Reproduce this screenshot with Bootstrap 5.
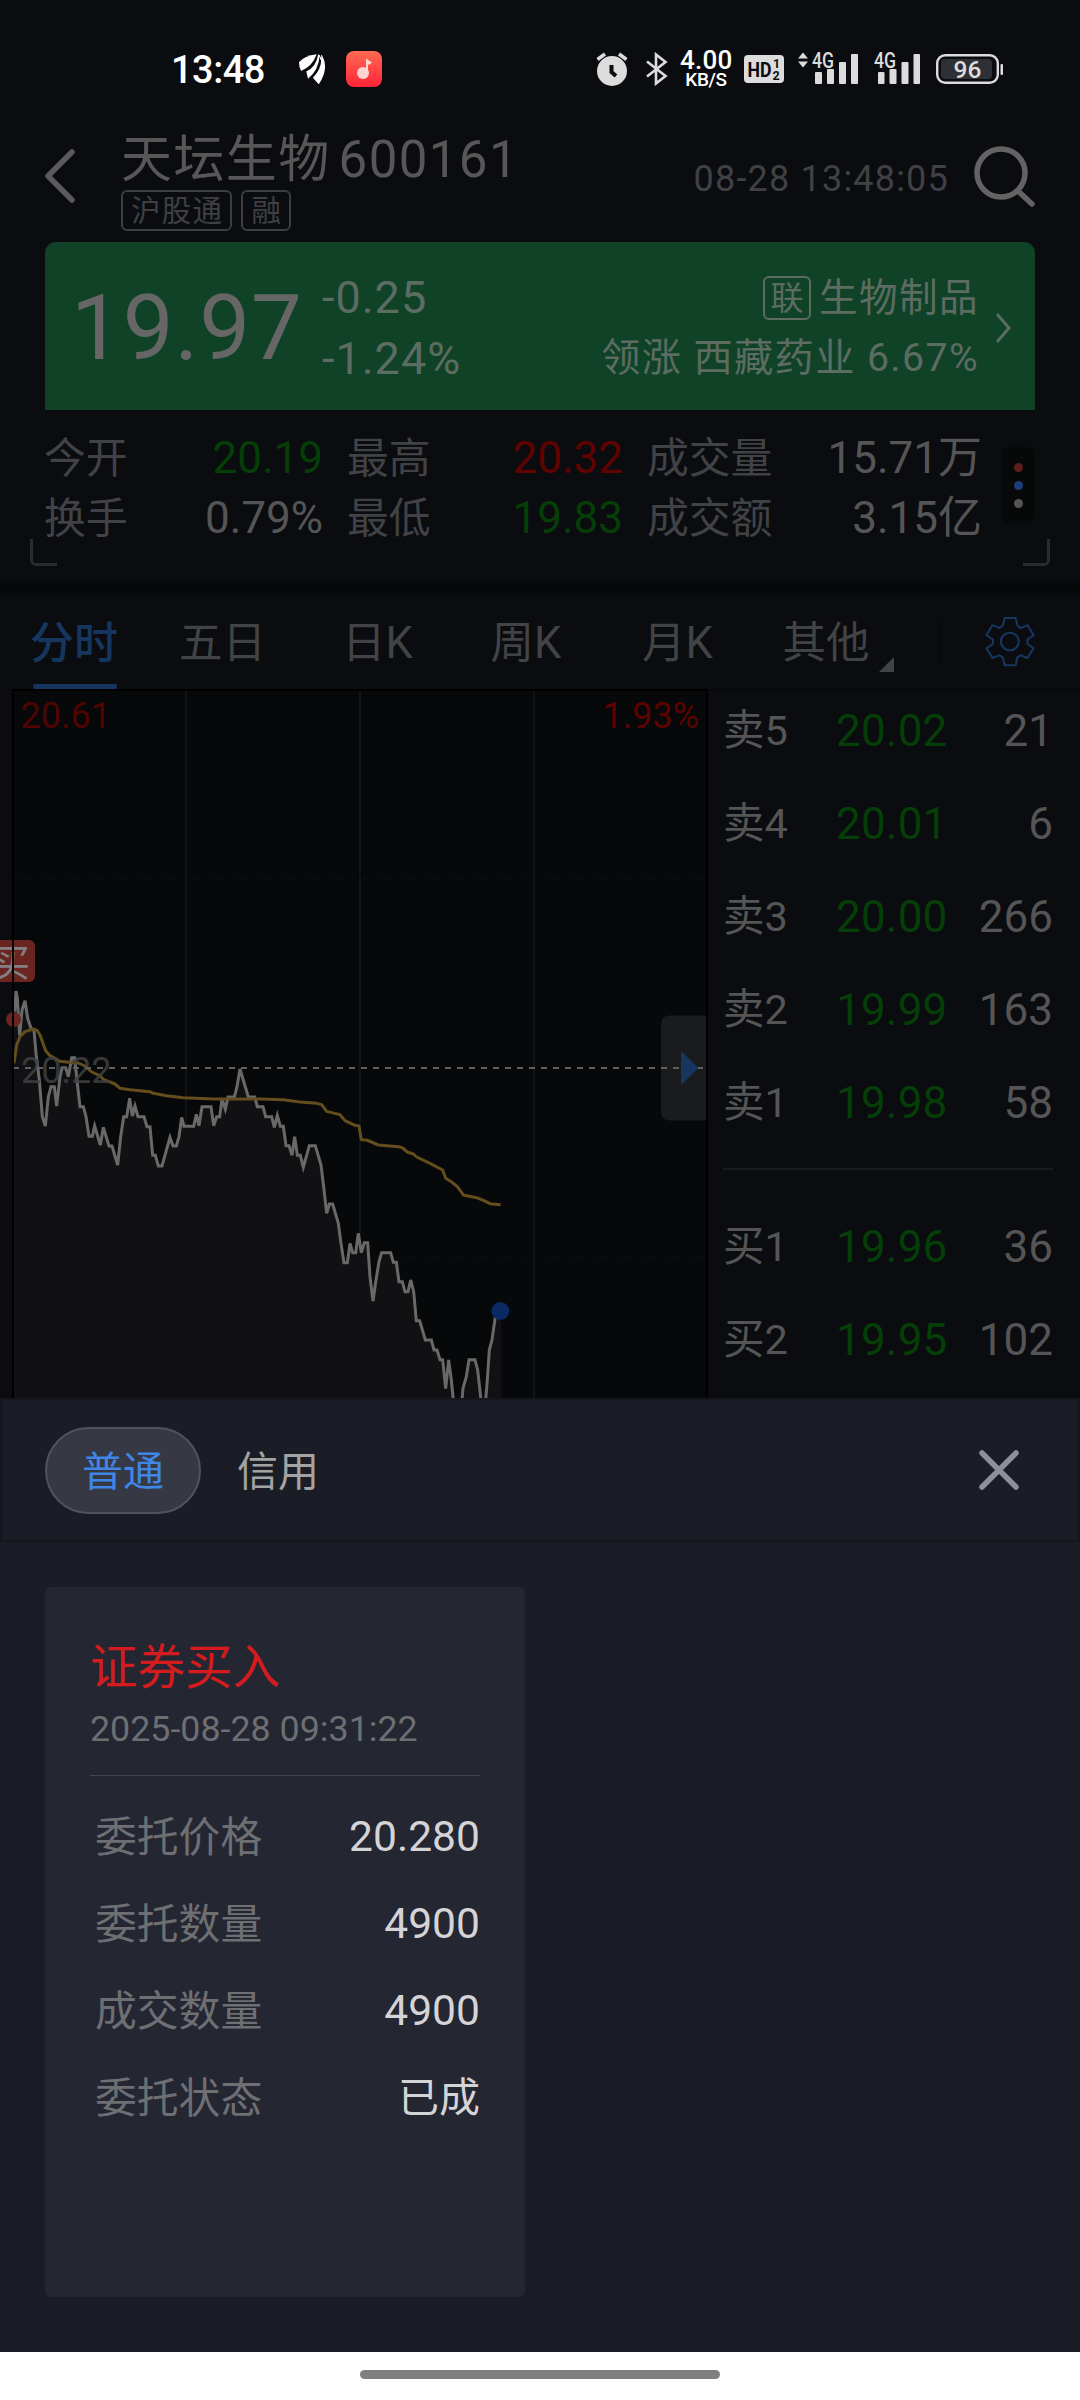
<!DOCTYPE html>
<html lang="zh-CN">
<head>
<meta charset="utf-8">
<meta name="viewport" content="width=device-width, initial-scale=1">
<title>天坛生物 600161</title>
<link href="https://cdn.jsdelivr.net/npm/bootstrap@5.3.0/dist/css/bootstrap.min.css" rel="stylesheet">
<style>
  body { background: #0a0c10; color: #555; font-family: Roboto, "Noto Sans CJK SC", sans-serif; font-size: 44px; line-height: 60px; }
  .screen { width: 1080px; height: 2400px; }
  svg { display: block; flex: none; }
  .status { height: 128px; padding: 10px 76px 0 171px; }
  .clock { font-size: 38px; font-weight: 500; color: #fff; letter-spacing: -.5px; width: 128px; padding-top: 2px; }
  .speed { font-weight: 500; color: #fff; width: 52px; margin: 0 12px; }
  .speed b { display: block; font-weight: 500; font-size: 26px; line-height: 20px; letter-spacing: .2px; }
  .speed i { display: block; font-style: normal; font-size: 19px; line-height: 18px; margin-top: 1px; letter-spacing: -.4px; }
  .music { margin-left: 21px; }
  .alarm { margin-left: auto; }
  .bt { margin-left: 18px; }
  .sig1 { margin-left: 14px; }
  .sig2 { margin-left: 15px; }
  .topbar { height: 114px; padding-left: 45px; padding-right: 45px; }
  .stock { margin-left: 46px; }
  .stock-name { font-size: 51px; letter-spacing: 1.4px; line-height: 64px; height: 62px; color: #575757; white-space: nowrap; }
  .stock-name span { margin-left: 8px; }
  .chips { gap: 9px; }
  .chip { border: 2px solid #3c3d40; border-radius: 6px; height: 41px; line-height: 39px; font-size: 29.5px; letter-spacing: 1.3px; padding: 0 7px 0 8px; color: #3f4043; }
  .stamp { font-size: 36px; letter-spacing: 1.2px; color: #404144; padding-top: 5px; }
  .search { margin: 18px 0 0 25px; }
  .quote { margin: 0 45px; height: 168px; background: #104227; border-radius: 11px 11px 0 0; letter-spacing: 1.4px; color: #5c6c63; padding: 3px 24px 0 26px; }
  .last { font-size: 90.5px; line-height: 168px; color: #666; width: 251px; letter-spacing: .9px; }
  .chg div { line-height: 61px; font-size: 45px; letter-spacing: 1px; }
  .sector { font-size: 39.2px; line-height: 61px; white-space: nowrap; }
  .sector-name { font-size: 38.6px; padding-top: 1px; }
  .sector .lian { border: 2px solid #5c6c63; border-radius: 6px; width: 48px; height: 44px; line-height: 41px; font-size: 33px; text-align: center; letter-spacing: 0; }
  .more { margin-left: 16px; }
  .stats { height: 171px; padding: 18px 45px 0 44px; }
  .stats-grid { display: grid; grid-template-columns: 279px 276px 335px; column-gap: 24px; align-content: start; }
  .stats-grid > div { height: 60px; }
  .lbl { font-size: 41.8px; color: #414245; padding-top: 1px; }
  .up { color: #600300; } .dn { color: #053e07; }
  .dots { width: 33px; height: 76px; border-radius: 8px; background: #070808; gap: 9px; margin-top: 19px; }
  .dots i { width: 9px; height: 9px; border-radius: 50%; background: #555; }
  .dots i:nth-child(1) { background: #5c1f19; } .dots i:nth-child(2) { background: #1a3e77; }
  .corner-l, .corner-r { position: absolute; bottom: 15px; width: 27px; height: 27px; border-bottom: 3px solid #2a2b2d; }
  .corner-l { left: 30px; border-left: 3px solid #2a2b2d; border-bottom-left-radius: 6px; }
  .corner-r { right: 30px; border-right: 3px solid #2a2b2d; border-bottom-right-radius: 6px; }
  .band { height: 12px; background: #070809; }
  .ktabs { height: 96px; color: #424345; font-size: 43.5px; }
  .ktabs > div { line-height: 102px; height: 96px; text-align: center; }
  .ktabs > div:nth-child(1) { width: 148px; color: #17365f; font-weight: 500; font-size: 44px; position: relative; }
  .ktabs > div:nth-child(1)::after { content: ""; position: absolute; left: 33px; width: 84px; bottom: 0; height: 5px; border-radius: 2px; background: #17365f; }
  .ktabs > div:nth-child(2) { width: 149px; }
  .ktabs > div:nth-child(3) { width: 161px; }
  .ktabs > div:nth-child(4) { width: 136px; }
  .ktabs > div:nth-child(5) { width: 167px; }
  .ktabs > div:nth-child(6) { width: 130px; }
  .tri { margin-top: 46px; margin-left: -12px; }
  .vline { width: 2px; height: 45px; background: #08090b; margin-left: 46px; }
  .gear { margin-left: 43px; }
  .market { height: 709px; overflow: hidden; }
  .plot { width: 708px; flex: none; }
  .book { padding: 0 27px 0 15px; width: 372px; border-top: 2px solid #08090b; }
  .asks { margin-top: -7px; }
  .book .lv { height: 93px; display: grid; grid-template-columns: 113px 112px 1fr; align-items: center; }
  .book .lv span:first-child { font-size: 41.5px; }
  .book .lv span:nth-child(2) { letter-spacing: .2px; }
  .book .lv span:last-child { text-align: right; }
  .book-rule { height: 2px; background: #1a1b1f; margin: 19px 0 30px; }
  .sheet { background: #1a1d25; height: 954px; }
  .sheet-head { height: 144px; border: 2px solid #15171c; padding: 0 58px 0 43px; font-size: 41px; }
  .pill { width: 156px; height: 87px; border-radius: 44px; border: 2px solid #50525c; background: #363843; color: #3f86e6; line-height: 87px; text-align: center; }
  .credit { margin-left: 36px; color: #a3a3a4; padding-top: 3px; }
  .order { background: #242632; border: 0; border-radius: 6px; width: 480px; height: 710px; margin: 45px 0 0 45px; padding: 45px; color: #d4d4d6; }
  .order-title { font-size: 47.5px; color: #d41c1f; line-height: 72px; height: 70px; }
  .order-time { font-size: 35.8px; color: #6e6f73; line-height: 54px; height: 52px; }
  .order hr { margin: 21px 0 17px; border-top: 1px solid #45474f; opacity: 1; }
  .order .ln { height: 87px; line-height: 87px; font-size: 42.6px; padding-left: 5px; }
  .order .ln span:first-child { color: #6e6f73; font-size: 41.8px; padding-top: 1px; }
  .order .ln:last-child span:last-child { font-size: 41px; padding-top: 1px; }
  .homebar { height: 48px; background: #fff; padding-bottom: 3px; }
  .homebar div { width: 360px; height: 9px; border-radius: 5px; background: #7f7f7f; }
</style>
<script src="https://cdn.jsdelivr.net/npm/bootstrap@5.3.0/dist/js/bootstrap.bundle.min.js"></script>
</head>
<body>
<div class="screen d-flex flex-column overflow-hidden">

  <div class="status d-flex align-items-center">
    <div class="clock">13:48</div>
    <svg width="26" height="30" viewBox="868 103 75 87" preserveAspectRatio="none" fill="#fff"><path d="M868 127Q884 108 919 104Q906 140 874 152Q868 140 868 127Z"/><path d="M923 105Q918 140 889 154L894 175Q925 150 928 106Z"/><path d="M932 106Q936 145 908 172L925 191Q956 145 934 106Z"/><path d="M924 103L944 130L930 120Z"/></svg>
    <svg class="music" width="36" height="36" viewBox="0 0 36 36"><defs><linearGradient id="mg" x2="0" y2="1"><stop stop-color="#ff6a52"/><stop offset="1" stop-color="#ff2338"/></linearGradient></defs><rect width="36" height="36" rx="8" fill="url(#mg)"/><circle cx="17" cy="22" r="6" fill="#ffd3cf"/><path d="M20 22V7.500L26 11.500L23 14L22 13V22Z" fill="#ffd9d3"/></svg>
    <svg class="alarm" width="32" height="34" viewBox="0 0 32 34"><circle cx="16" cy="19" r="15" fill="#dcdcdc"/><path d="M1.500 7.500L9 2M30.500 7.500L23 2" stroke="#dcdcdc" stroke-width="3.500" fill="none"/><path d="M15.500 13V20L20 24" stroke="#0a0c10" stroke-width="4" fill="none"/></svg>
    <svg class="bt" width="22" height="34" viewBox="0 0 22 34" fill="none" stroke="#dcdcdc" stroke-width="2.600"><path d="M1 9.500L19.500 24L10 31.500V2.500L19.500 10L1 24.500"/></svg>
    <div class="speed text-center"><b>4.00</b><i>KB/S</i></div>
    <svg width="40" height="28" viewBox="0 0 40 28"><rect width="40" height="28" rx="4" fill="#dcdcdc"/><g fill="#0a0c10" font-weight="700"><text x="3.500" y="21.500" font-size="20.500" textLength="24" lengthAdjust="spacingAndGlyphs">HD</text><text x="29" y="13" font-size="12.500">1</text><text x="28.500" y="25" font-size="12.500">2</text></g></svg>
    <svg class="sig1" width="61" height="46" viewBox="0 -6 61 46" fill="#dcdcdc"><path d="M0 6.500L5 .5L10 6.500ZM0 9.500H10L5 15.500Z"/><text x="14" y="15.500" font-size="21.500" font-weight="500" textLength="22" lengthAdjust="spacingAndGlyphs">4G</text><rect x="17" y="20" width="7" height="12" rx="1"/><rect x="29" y="17" width="7" height="15" rx="1"/><rect x="41" y="10" width="7" height="22" rx="1"/><rect x="53" y="2" width="7" height="30" rx="1"/></svg>
    <svg class="sig2" width="48" height="46" viewBox="0 -6 48 46" fill="#dcdcdc"><text x="0" y="15.500" font-size="21.500" font-weight="500" textLength="22" lengthAdjust="spacingAndGlyphs">4G</text><rect x="4" y="20" width="6.500" height="12" rx="1"/><rect x="15.500" y="17" width="7" height="15" rx="1"/><rect x="27.500" y="10" width="7" height="22" rx="1"/><rect x="39.500" y="2" width="6.500" height="30" rx="1"/></svg>
    <svg class="sig1" width="68" height="30" viewBox="0 0 68 30"><rect x="1.200" y="1.200" width="60.600" height="27.600" rx="8" fill="none" stroke="#dcdcdc" stroke-width="2.400"/><rect x="5" y="5" width="51" height="20" rx="4" fill="#2e3035"/><rect x="64.500" y="10" width="2.500" height="11" rx="1" fill="#dcdcdc"/><text x="31.500" y="23.500" font-size="24.500" font-weight="500" fill="#dcdcdc" text-anchor="middle">96</text></svg>
  </div>

  <div class="topbar d-flex">
    <svg class="mt-3" width="30" height="64" viewBox="0 -5 30 64"><path d="M27 3L3 27L27 51" fill="none" stroke="#5a5a5a" stroke-width="5.500" stroke-linecap="round" stroke-linejoin="round"/></svg>
    <div class="stock">
      <div class="stock-name">天坛生物<span>600161</span></div>
      <div class="chips d-flex"><div class="chip">沪股通</div><div class="chip">融</div></div>
    </div>
    <div class="stamp ms-auto mt-3">08-28 13:48:05</div>
    <svg class="search" width="61" height="61" viewBox="0 0 61 61" fill="none" stroke="#636363" stroke-width="5.500" stroke-linecap="round"><circle cx="27" cy="27" r="24"/><path d="M44 45L58 58"/></svg>
  </div>

  <div class="quote d-flex align-items-center">
    <div class="last">19.97</div>
    <div class="chg"><div>-0.25</div><div>-1.24%</div></div>
    <div class="sector ms-auto">
      <div class="sector-name d-flex align-items-center justify-content-end"><span class="lian me-2">联</span>生物制品</div>
      <div class="text-end">领涨 西藏药业 6.67%</div>
    </div>
    <svg class="more" width="16" height="32" viewBox="0 0 16 32"><path d="M2 2L14 16L2 30" fill="none" stroke="#5c6c63" stroke-width="3"/></svg>
  </div>

  <div class="stats d-flex justify-content-between position-relative">
    <div class="stats-grid">
      <div class="d-flex justify-content-between"><span class="lbl">今开</span><span class="dn">20.19</span></div>
      <div class="d-flex justify-content-between"><span class="lbl">最高</span><span class="up">20.32</span></div>
      <div class="d-flex justify-content-between"><span class="lbl">成交量</span><span>15.71万</span></div>
      <div class="d-flex justify-content-between"><span class="lbl">换手</span><span>0.79%</span></div>
      <div class="d-flex justify-content-between"><span class="lbl">最低</span><span class="dn">19.83</span></div>
      <div class="d-flex justify-content-between"><span class="lbl">成交额</span><span>3.15亿</span></div>
    </div>
    <div class="dots d-flex flex-column align-items-center justify-content-center"><i></i><i></i><i></i></div>
    <div class="corner-l"></div><div class="corner-r"></div>
  </div>
  <div class="band"></div>

  <div class="ktabs d-flex align-items-center">
    <div>分时</div><div>五日</div><div>日K</div><div>周K</div><div>月K</div><div>其他</div>
    <svg class="tri" width="15" height="15"><path d="M15 0V15H0Z" fill="#424345"/></svg>
    <span class="vline"></span>
    <svg class="gear" width="50" height="51" viewBox="1295 137 145 152" preserveAspectRatio="none" fill="none" stroke="#17365f" stroke-width="6" stroke-linejoin="round"><path d="M1352 143H1384L1389 165L1398 173L1418 164L1436 194L1418 207V220L1436 233L1418 262L1398 254L1388 261L1384 284H1352L1347 261L1337 254L1317 262L1299 233L1318 220V207L1299 194L1317 164L1337 173L1347 165Z"/><circle cx="1367" cy="213" r="26"/></svg>
  </div>

  <div class="market d-flex">
    <svg class="plot" width="708" height="709" viewBox="0 689 708 709">
      <rect x="13" y="690" width="694" height="710" fill="#060809"/>
      <g stroke="#121315" stroke-width="2"><path d="M186 691V1398M360 691V1398M534 691V1398"/></g>
      <g stroke="#0e0f10" stroke-width="1" stroke-dasharray="6 6"><path d="M14 878.500H706M14 1257.500H706"/></g>
      <g transform="translate(0 920) scale(.33333)" fill="none" stroke-linejoin="miter">
        <path fill="#111113" d="M42 275L48 213L52 235L59 347L66 270L75 242L83 295L93 325L102 330L108 400L118 480L127 590L136 618L145 530L153 500H163L170 558L180 470L186 443H197L205 470L215 413H224L232 490L240 560H250L258 590L267 649H277L284 618L301 675L310 622L327 678H336L353 735L362 650L371 590H380L389 535L397 588L405 558L414 590H432L441 620H450L458 706H466L475 738H486L510 652L519 678H529L537 650L545 592L552 619H581L589 583L597 617L606 560H633L641 617L650 590H659L666 537L676 568L684 531H703L711 500L720 447L745 531H764L772 560H789L797 590H815L823 622L832 586L841 619H850L858 677H867L876 706L884 650L892 706H901L910 742L928 677H946L963 735L971 800L980 880L988 852H998L1015 910L1023 970L1032 1028H1042L1050 970L1058 998H1067L1075 940L1084 998L1093 968H1103L1110 1070L1119 1143L1128 1080L1137 1025L1145 998H1172L1180 1027H1189L1197 1085H1207L1215 1115H1224L1232 1080L1241 1115L1249 1202H1259L1276 1260H1294L1302 1290H1311L1320 1319H1328L1337 1406L1346 1320L1354 1380L1360 1440H1386L1389 1405L1399 1370L1407 1319H1425L1433 1350L1443 1440H1457L1462 1380L1468 1290L1476 1260L1486 1190L1504 1173V1440H42Z"/>
        <path stroke="#696969" stroke-width="9" d="M44 275L48 213L52 235L59 347L66 270L75 242L83 295L93 325L102 330L108 400L118 480L127 590L136 618L145 530L153 500H163L170 558L180 470L186 443H197L205 470L215 413H224L232 490L240 560H250L258 590L267 649H277L284 618L301 675L310 622L327 678H336L353 735L362 650L371 590H380L389 535L397 588L405 558L414 590H432L441 620H450L458 706H466L475 738H486L510 652L519 678H529L537 650L545 592L552 619H581L589 583L597 617L606 560H633L641 617L650 590H659L666 537L676 568L684 531H703L711 500L720 447L745 531H764L772 560H789L797 590H815L823 622L832 586L841 619H850L858 677H867L876 706L884 650L892 706H901L910 742L928 677H946L963 735L971 800L980 880L988 852H998L1015 910L1023 970L1032 1028H1042L1050 970L1058 998H1067L1075 940L1084 998L1093 968H1103L1110 1070L1119 1143L1128 1080L1137 1025L1145 998H1172L1180 1027H1189L1197 1085H1207L1215 1115H1224L1232 1080L1241 1115L1249 1202H1259L1276 1260H1294L1302 1290H1311L1320 1319H1328L1337 1406L1346 1320L1354 1380L1360 1440H1386L1389 1405L1399 1370L1407 1319H1425L1433 1350L1443 1440H1457L1462 1380L1468 1290L1476 1260L1486 1190L1501 1173"/>
        <path stroke="#644e1e" stroke-width="9" stroke-linejoin="round" d="M42 430L50 375L60 350L75 335L100 327L112 332L120 345L137 392L150 407L180 424L220 428L235 429L255 438L275 456L300 467L310 478L345 492L360 505L390 509L450 515L460 520L500 527L550 533L640 537H780L850 539L900 546L950 550L965 554L980 574L1020 584L1035 602L1065 616L1077 618L1084 659L1100 660L1135 675L1195 680L1208 684L1222 696L1240 702L1250 711L1290 730L1328 750L1337 775L1355 786L1372 800L1390 825L1430 833L1452 842L1470 851L1502 854"/>
        <circle cx="1501" cy="1173" r="27" fill="#0b2a63"/>
      </g>
      <text x="21" y="1083" font-size="36" fill="#404041" fill-opacity=".85">20.22</text>
      <path d="M707 1015.500H670Q661 1015.500 661 1024.500V1111.500Q661 1120.500 670 1120.500H707Z" fill="#1a1b1c"/>
      <path d="M13 1068H704" stroke="#5f5f60" stroke-width="2" stroke-dasharray="6 6"/>
      <path d="M681 1051L698.500 1068L681 1085Z" fill="#17365f"/>
      <rect x="-7" y="940" width="42" height="42" rx="6" fill="#6a2520"/>
      <text x="11" y="976" font-size="38" fill="#828080" text-anchor="middle">买</text>
      <circle cx="13.500" cy="1019.500" r="7.500" fill="#6a2520"/>
      <path d="M13 1398V690H707V1398" fill="none" stroke="#000" stroke-width="2"/>
      <text x="20.500" y="728" font-size="36" fill="#500402">20.61</text>
      <text x="699" y="728" font-size="36" fill="#5c0300" text-anchor="end">1.93%</text>
    </svg>
    <div class="book">
      <div class="asks">
        <div class="lv"><span>卖5</span><span class="dn">20.02</span><span>21</span></div>
        <div class="lv"><span>卖4</span><span class="dn">20.01</span><span>6</span></div>
        <div class="lv"><span>卖3</span><span class="dn">20.00</span><span>266</span></div>
        <div class="lv"><span>卖2</span><span class="dn">19.99</span><span>163</span></div>
        <div class="lv"><span>卖1</span><span class="dn">19.98</span><span>58</span></div>
      </div>
      <div class="book-rule"></div>
      <div class="lv"><span>买1</span><span class="dn">19.96</span><span>36</span></div>
      <div class="lv"><span>买2</span><span class="dn">19.95</span><span>102</span></div>
    </div>
  </div>

  <div class="sheet">
    <div class="sheet-head d-flex align-items-center">
      <div class="pill">普通</div>
      <div class="credit">信用</div>
      <svg class="ms-auto" width="42" height="42" viewBox="0 0 42 42"><path d="M4 4L38 38M38 4L4 38" stroke="#8e8f9d" stroke-width="5.500" stroke-linecap="round"/></svg>
    </div>
    <div class="order card">
      <div class="order-title">证券买入</div>
      <div class="order-time">2025-08-28 09:31:22</div>
      <hr>
      <div class="ln d-flex justify-content-between"><span>委托价格</span><span>20.280</span></div>
      <div class="ln d-flex justify-content-between"><span>委托数量</span><span>4900</span></div>
      <div class="ln d-flex justify-content-between"><span>成交数量</span><span>4900</span></div>
      <div class="ln d-flex justify-content-between"><span>委托状态</span><span>已成</span></div>
    </div>
  </div>
  <div class="homebar d-flex justify-content-center align-items-center"><div></div></div>
</div>
</body>
</html>
